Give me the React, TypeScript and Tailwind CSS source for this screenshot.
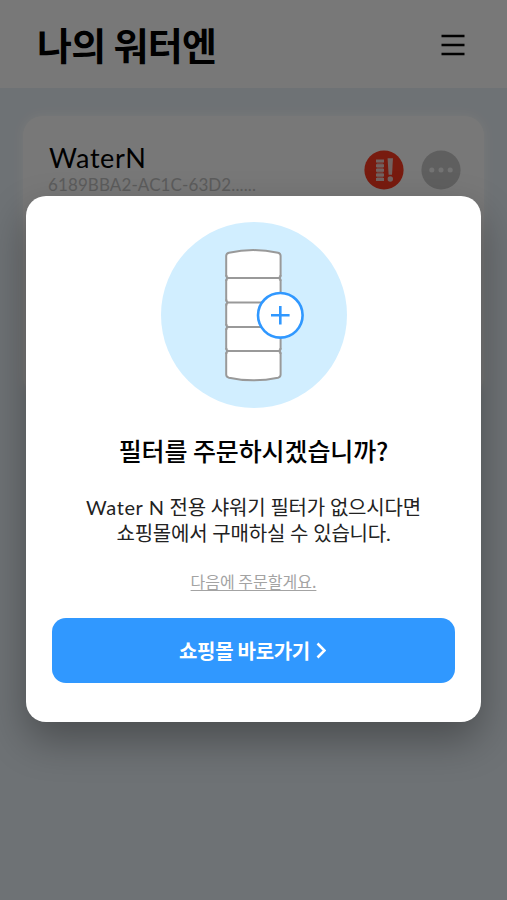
const SEAMS = [56, 80.5, 105, 129];

const MenuIcon = () => (
  <svg width="24" height="22" viewBox="0 0 24 22" fill="none" stroke="#000" strokeWidth="2.6">
    <path d="M0.5 2H23.5M0.5 11H23.5M0.5 20H23.5" />
  </svg>
);

const FilterAlertIcon = () => (
  <svg width="40" height="40" viewBox="0 0 40 40">
    <circle cx="20" cy="20" r="19.6" fill="#ff3a21" />
    <path
      d="M12 9.6h8v3h-8zM12 14.2h8v3h-8zM12 18.8h8v3h-8zM12 23.4h8v3h-8zM12 28h8v3h-8z"
      fill="#f0d2ce"
    />
    <path d="M12.8 12.600h6.400v15.400h-6.400z" fill="#f0d2ce" fillOpacity="0.45" />
    <path d="M23.600 8.300h5.400l-1 16.400h-3.400z" fill="#f0d2ce" />
    <circle cx="26.3" cy="29" r="2.7" fill="#f0d2ce" />
  </svg>
);

const MoreIcon = () => (
  <svg width="40" height="40" viewBox="0 0 40 40">
    <circle cx="20" cy="20" r="19.6" fill="#cbcbcb" />
    <g fill="#f4f4f4">
      <circle cx="10.8" cy="20" r="2.5" />
      <circle cx="20" cy="20" r="2.5" />
      <circle cx="29.2" cy="20" r="2.5" />
    </g>
  </svg>
);

const FilterIllustration = () => (
  <svg width="186" height="186" viewBox="0 0 186 186" fill="none">
    <circle cx="93" cy="93" r="93" fill="#d1eeff" />
    <path
      d="M65.2 34Q65.2 31.5 68 30.8Q92 25.4 117 30.8Q119.600 31.500 119.600 34V152.500Q119.600 155 117 155.700Q92 161 68 155.700Q65.200 155 65.200 152.500Z"
      fill="#fff"
      stroke="#999"
      strokeWidth="2"
    />
    {/* seams between the cartridge rings, pinched slightly on each side */}
    {SEAMS.map((y) => (
      <g key={y}>
        <path
          d={`M64 ${y - 2}L65.500 ${y}L64 ${y + 2}ZM120.800 ${y - 2}L119.300 ${y}L120.800 ${y + 2}Z`}
          fill="#d1eeff"
        />
        <path
          d={`M66.500 ${y}H118.500M65.300 ${y - 3}Q65.300 ${y} 67.500 ${y}Q65.300 ${y} 65.300 ${y + 3}M119.500 ${y - 3}Q119.500 ${y} 117.300 ${y}Q119.500 ${y} 119.500 ${y + 3}`}
          stroke="#999"
          strokeWidth="2"
        />
      </g>
    ))}
    <circle cx="119.300" cy="93.300" r="22.300" fill="#fff" stroke="#3098ff" strokeWidth="2.600" />
    <path d="M110 93.300H128.600M119.300 84V102.600" stroke="#3098ff" strokeWidth="2.600" />
  </svg>
);

const Header = () => (
  <header className="flex h-[88px] items-center justify-between bg-white pr-[42px] pl-[37px]">
    <h1 className="text-[38px] leading-[54px] font-bold tracking-[-0.7px] text-black">나의 워터엔</h1>
    <button type="button" aria-label="menu" className="pt-px">
      <MenuIcon />
    </button>
  </header>
);

const DeviceCard = () => (
  <section className="mx-[23px] mt-[28px] flex h-[280px] items-start justify-between rounded-[20px] bg-white pt-[27px] pr-[23px] pl-[26px] shadow-[0_0_8px_2px_rgba(255,255,255,0.8)]">
    <div>
      <h2 className="font-['Lato','Noto_Sans_CJK_KR',sans-serif] text-[27px] leading-[30px] tracking-[0.6px] text-black">
        WaterN
      </h2>
      <p className="-ml-px font-['Lato','Noto_Sans_CJK_KR',sans-serif] text-[17px] leading-[23px] tracking-[0.1px] text-[#c4c4c4]">
        6189BBA2-AC1C-63D2......
      </p>
    </div>
    <div className="flex gap-[17px] pt-[6.5px]">
      <FilterAlertIcon />
      <MoreIcon />
    </div>
  </section>
);

const OrderDialog = () => (
  <div
    role="dialog"
    className="absolute inset-x-[26px] top-[196px] flex h-[526px] flex-col items-center rounded-[20px] bg-white px-[26px] pt-[26px] shadow-[0_18px_40px_rgba(0,0,0,0.32)]"
  >
    <FilterIllustration />
    <h3 className="mt-[24px] text-[25px] leading-9 font-medium tracking-[-0.1px] whitespace-nowrap text-black">
      필터를 주문하시겠습니까?
    </h3>
    <p className="mt-[26px] text-center font-['Lato','Noto_Sans_CJK_KR',sans-serif] text-[20px] leading-[26px] tracking-[-0.2px] whitespace-nowrap text-[#222]">
      <span className="tracking-[0.6px]">Water N</span> 전용 샤워기 필터가 없으시다면
      <br />
      쇼핑몰에서 구매하실 수 있습니다.
    </p>
    <button
      type="button"
      className="mt-[23px] text-[16px] leading-6 text-[#a3a3a3] underline decoration-1 underline-offset-2"
    >
      다음에 주문할게요.
    </button>
    <button
      type="button"
      className="mt-[25px] flex h-[65px] w-full items-center justify-center gap-[6px] rounded-[14px] bg-[#3098ff] pr-[2px] text-[20px] font-bold tracking-[-0.3px] text-white"
    >
      쇼핑몰 바로가기
      <svg width="10" height="17" viewBox="0 0 10 17" fill="none" stroke="#fff" strokeWidth="2.600">
        <path d="M1.500 1.500L8.500 8.500L1.500 15.500" />
      </svg>
    </button>
  </div>
);

export default function App() {
  return (
    <div className="relative h-[900px] w-[507px] overflow-hidden bg-[#eaf2f8] font-['Noto_Sans_CJK_KR',sans-serif]">
      <Header />
      <DeviceCard />
      <div className="absolute inset-0 bg-black/53" />
      <OrderDialog />
    </div>
  );
}
